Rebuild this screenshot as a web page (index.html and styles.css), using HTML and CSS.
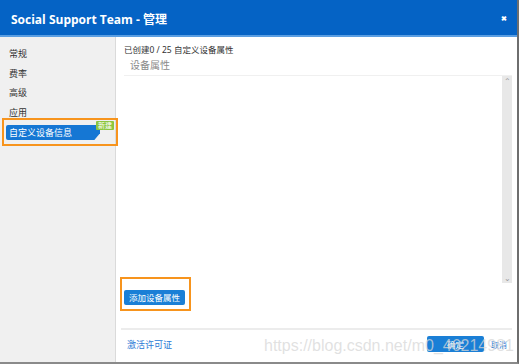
FILE: index.html
```
<!DOCTYPE html>
<html lang="zh-CN">
<head>
    <meta charset="UTF-8">
    <title>Social Support Team - 管理</title>
    <link rel="stylesheet" href="styles.css">
</head>
<body>
    <div class="window">
        <!-- Title bar -->
        <div class="titlebar">
            <span class="title">Social Support Team - 管理</span>
            <span class="close">&#10006;</span>
        </div>

        <div class="body">
            <!-- Sidebar -->
            <div class="sidebar">
                <a class="nav-item" href="#">常规</a>
                <a class="nav-item" href="#">费率</a>
                <a class="nav-item" href="#">高级</a>
                <a class="nav-item" href="#">应用</a>
                <div class="nav-active">
                    <a class="pill" href="#">自定义设备信息</a>
                    <span class="badge">新建</span>
                </div>
            </div>

            <!-- Content -->
            <div class="main">
                <div class="count">已创建0 / 25 自定义设备属性</div>
                <div class="list-head">设备属性</div>
                <div class="list">
                    <div class="list-body"></div>
                    <div class="scrollbar">
                        <span class="arrow">&#8963;</span>
                        <span class="arrow">&#8964;</span>
                    </div>
                </div>
                <div class="add-row">
                    <button class="btn">添加设备属性</button>
                </div>
                <div class="footer">
                    <a class="link" href="#">激活许可证</a>
                    <div class="actions">
                        <button class="btn btn-ok">确定</button>
                        <a class="link small" href="#">取消</a>
                    </div>
                </div>
            </div>
        </div>

        <!-- Annotation boxes -->
        <div class="mark mark-nav"></div>
        <div class="mark mark-add"></div>
        <div class="watermark">https://blog.csdn.net/m0_46214981</div>
    </div>
</body>
</html>
```

FILE: styles.css
```
body {
    margin: 0;
    padding: 0;
    background: #fff;
    font-family: "Noto Sans", "Noto Sans CJK SC", sans-serif;
}
.window {
    position: relative;
    width: 517px;
    height: 362px;
    border-right: 2px solid #6e6e6e;
    border-bottom: 2px solid #8a8a8a;
    display: flex;
    flex-direction: column;
    overflow: hidden;
}
.titlebar {
    height: 37px;
    background: #0563c5;
    border-bottom: 2px solid #5a9ee2;
    display: flex;
    align-items: center;
    justify-content: space-between;
    padding: 2px 10px 0 11px;
    color: #fff;
    box-sizing: border-box;
    flex-shrink: 0;
}
.title {
    font-size: 12px;
    font-weight: bold;
    font-family: "Open Sans", "Noto Sans CJK SC", sans-serif;
}
.close {
    font-size: 7px;
    font-weight: bold;
}
.body {
    flex: 1;
    display: flex;
    min-height: 0;
}
.sidebar {
    width: 115px;
    background: #f0f0f0;
    border-right: 1px solid #dadada;
    padding-top: 7px;
    flex-shrink: 0;
}
.nav-item {
    display: block;
    height: 19.5px;
    line-height: 19.5px;
    padding-left: 9px;
    font-size: 9px;
    color: #333;
    text-decoration: none;
}
.nav-active {
    position: relative;
    padding: 3px 15px 0 6px;
}
.pill {
    display: block;
    height: 15px;
    line-height: 15px;
    padding-left: 3px;
    font-size: 9px;
    background: #1577d4;
    color: #fff;
    text-decoration: none;
    border-radius: 2px 0 0 2px;
    clip-path: polygon(0 0, 100% 0, 100% 55%, 94% 100%, 0 100%);
}
.badge {
    position: absolute;
    top: -1px;
    right: 1px;
    background: #8cc63f;
    color: #fff;
    font-size: 7px;
    line-height: 9px;
    padding: 0 2px;
    border-radius: 1px;
}
.main {
    flex: 1;
    display: flex;
    flex-direction: column;
    padding: 0 5px 0 8px;
    min-width: 0;
}
.count {
    font-size: 8.5px;
    color: #333;
    margin-top: 7px;
    height: 12px;
    line-height: 12px;
}
.list-head {
    font-size: 10px;
    color: #8a8a8a;
    padding-left: 6px;
    height: 19px;
    line-height: 19px;
    border-bottom: 1px solid #f0f0f0;
}
.list {
    height: 207px;
    display: flex;
}
.list-body {
    flex: 1;
}
.scrollbar {
    width: 10px;
    background: #e8e8e8;
    display: flex;
    flex-direction: column;
    justify-content: space-between;
    align-items: center;
    color: #999;
    font-size: 8px;
    line-height: 10px;
}
.add-row {
    height: 44px;
    padding-top: 1px;
}
.btn {
    background: #1a7fd6;
    color: #fff;
    border: none;
    border-radius: 2px;
    font-size: 8.5px;
    font-family: "Noto Sans CJK SC", sans-serif;
    height: 15px;
    padding: 0 5px;
    cursor: pointer;
}
.footer {
    border-top: 2px solid #ececec;
    margin-left: -3px;
    display: flex;
    justify-content: space-between;
    align-items: center;
    height: 28px;
    padding: 0 5px 0 6px;
}
.actions {
    display: flex;
    align-items: center;
    gap: 7px;
}
.btn-ok {
    width: 57px;
    height: 16px;
}
.link {
    color: #2a7ad5;
    font-size: 9px;
    text-decoration: none;
}
.link.small {
    font-size: 8px;
}

/* Orange highlight boxes */
.mark {
    position: absolute;
    border: 2px solid #f7941d;
    box-sizing: border-box;
}
.mark-nav {
    left: 2px;
    top: 118px;
    width: 116px;
    height: 28px;
}
.mark-add {
    left: 120px;
    top: 277px;
    width: 71px;
    height: 34px;
}
.watermark {
    position: absolute;
    left: 264px;
    top: 337px;
    font-family: "Liberation Sans", Arial, sans-serif;
    font-size: 16px;
    color: rgba(215, 215, 215, 0.75);
    pointer-events: none;
}
```
